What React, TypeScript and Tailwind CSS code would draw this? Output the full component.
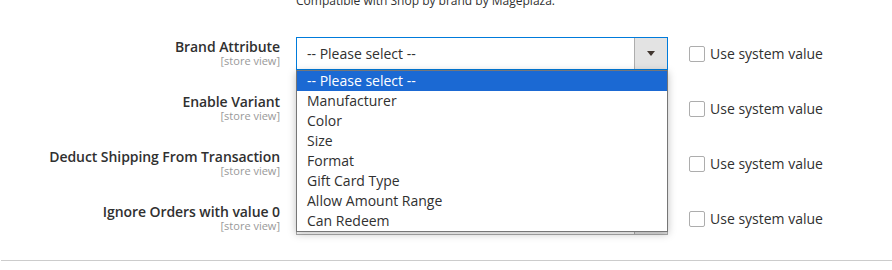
import React from 'react'

const rows = [
  { label: 'Brand Attribute', focused: true },
  { label: 'Enable Variant', focused: false },
  { label: 'Deduct Shipping From Transaction', focused: false },
  { label: 'Ignore Orders with value 0', focused: false },
]

const options = [
  '-- Please select --',
  'Manufacturer',
  'Color',
  'Size',
  'Format',
  'Gift Card Type',
  'Allow Amount Range',
  'Can Redeem',
]

function Arrow() {
  return (
    <svg width="8" height="5" viewBox="0 0 8 5">
      <path d="M0 0h8L4 5z" fill="#41362f" />
    </svg>
  )
}

function SelectBox({ focused }: { focused: boolean }) {
  return (
    <div
      className={`flex h-[33px] w-[372px] border bg-white ${
        focused ? 'border-[#007bdb]' : 'border-[#adadad]'
      }`}
    >
      <div className="flex flex-1 items-center pl-[10px] text-[14px] leading-[20px] text-[#303030]">
        {focused ? '-- Please select --' : ''}
      </div>
      <div className="flex w-[33px] items-center justify-center border-l border-[#adadad] bg-[#e3e3e3]">
        <Arrow />
      </div>
    </div>
  )
}

export default function App() {
  return (
    <div className="h-[270px] w-[892px] overflow-hidden bg-white font-['Open_Sans',sans-serif] text-[#303030]">
      <div className="relative pt-px">
        <p className="-mt-[9px] pl-[296px] text-[12px] leading-[18px] text-[#303030]">
          Compatible with Shop by brand by Mageplaza.
        </p>

        <div className="mt-[27px] flex flex-col gap-[22px]">
          {rows.map((row) => (
            <div key={row.label} className="flex items-start">
              <div className="flex w-[280px] flex-col items-end pt-px text-right">
                <span className="text-[14px] font-semibold leading-[17px] tracking-[-0.005em] text-[#303030]">
                  {row.label}
                </span>
                <span className="text-[11px] leading-[12px] text-[#999999]">[store view]</span>
              </div>
              <div className="ml-[16px]">
                <SelectBox focused={row.focused} />
              </div>
              <div className="ml-[21px] flex h-[33px] items-center">
                <span className="mt-[1px] h-[16px] w-[16px] rounded-[2px] border border-[#adadad] bg-white" />
                <span className="ml-[5px] text-[14px] leading-[20px] text-[#303030]">Use system value</span>
              </div>
            </div>
          ))}
        </div>

        <div className="mt-[25px] ml-[1px] h-px bg-[#cccccc]" />

        <ul className="absolute left-[296px] top-[70px] w-[372px] border border-[#767676] bg-white shadow-[0_2px_8px_rgba(0,0,0,0.25)]">
          {options.map((opt, i) => (
            <li
              key={opt}
              className={`h-[20px] pl-[10px] text-[14px] leading-[20px] ${
                i === 0 ? 'bg-[#1b69d3] text-white' : 'text-[#303030]'
              }`}
            >
              {opt}
            </li>
          ))}
        </ul>
      </div>
    </div>
  )
}
